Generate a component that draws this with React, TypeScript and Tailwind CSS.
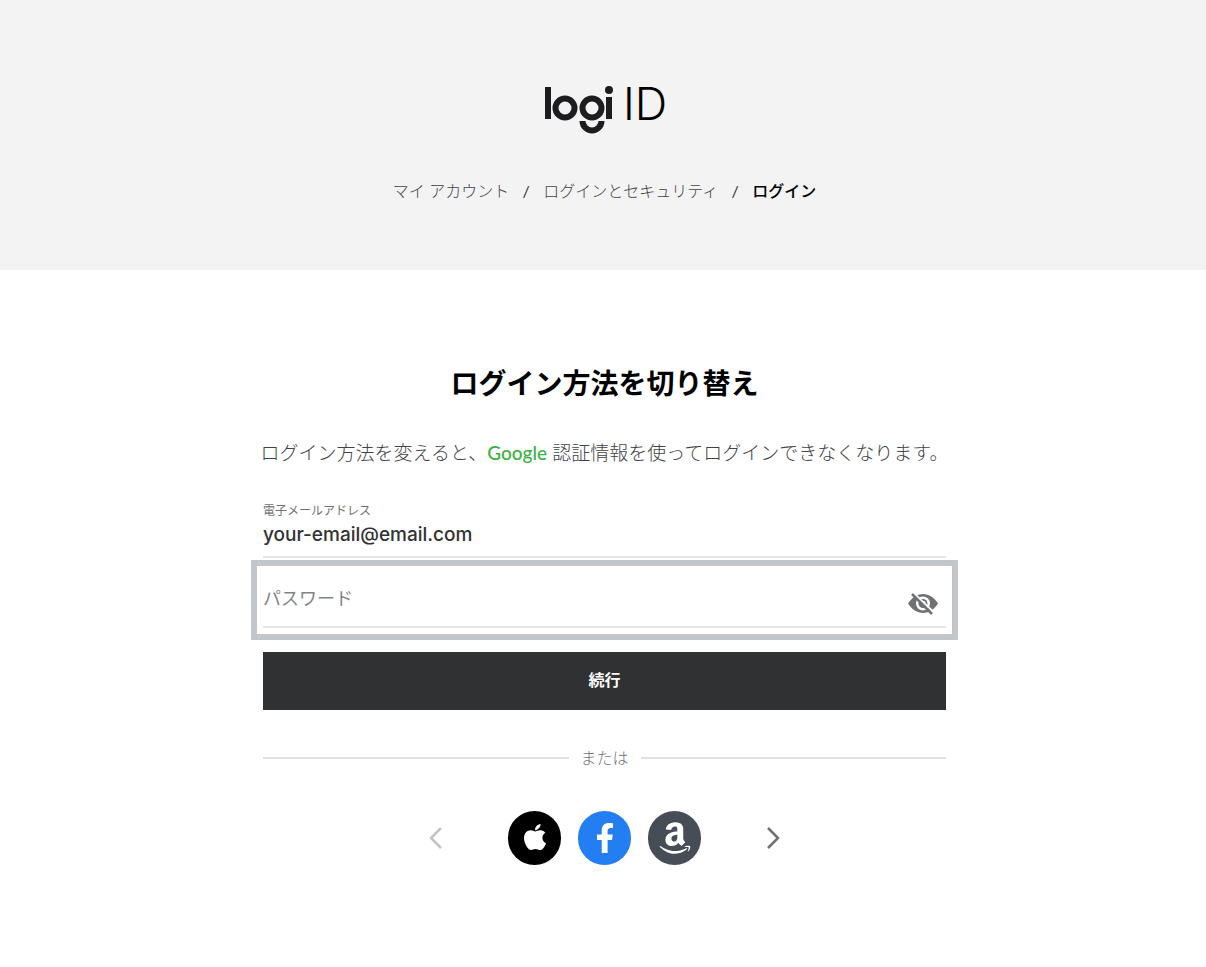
import { useState } from "react";
import { FaAmazon, FaApple, FaFacebookF } from "react-icons/fa";

const breadcrumbs = [
  { label: "マイ アカウント", href: "#account" },
  { label: "ログインとセキュリティ", href: "#security" },
];

const providers = [
  {
    name: "Apple",
    className: "bg-black",
    icon: <FaApple className="size-8 pb-0.5" />,
  },
  {
    name: "Facebook",
    className: "bg-[#237ef2]",
    icon: <FaFacebookF className="size-[30px]" />,
  },
  {
    name: "Amazon",
    className: "bg-[#474d57]",
    icon: <FaAmazon className="size-9" />,
  },
];

function Logo() {
  return (
    <svg
      viewBox="0 0 120 48"
      className="w-[120px] h-12 overflow-visible"
      role="img"
      aria-label="logi ID"
    >
      <g fill="#1d1d1f">
        <rect x="0" y="1" width="6" height="32" />
        <rect x="61" y="11" width="6" height="22" />
        <circle cx="64" cy="4" r="4" />
      </g>
      <g fill="none" stroke="#1d1d1f" strokeWidth="6">
        <circle cx="20" cy="22" r="9.500" />
        <circle cx="47" cy="22" r="9.500" />
        <path d="M37.500 35a9.500 9.500 0 0 0 19 0" />
      </g>
      <text
        x="78"
        y="34"
        fontSize="45"
        fontWeight="300"
        fontFamily="Inter, sans-serif"
        fill="#000"
      >
        ID
      </text>
    </svg>
  );
}

function EyeOff() {
  return (
    <svg viewBox="0 0 30 22" className="w-[30px] h-[22px]" aria-hidden="true">
      <path
        d="M0 10.500C4 4.500 9 1 15 1s11 3.500 15 9.500C26 16.500 21 20 15 20S4 16.500 0 10.500z"
        fill="#707173"
      />
      <circle cx="15" cy="10.500" r="7" fill="#fff" />
      <circle cx="15" cy="10.500" r="4.500" fill="#707173" />
      <circle cx="16" cy="9.500" r="1.500" fill="#fff" />
      <path d="M5.500 0L26 19.500" stroke="#fff" strokeWidth="2" />
      <path d="M4 1l20 20" stroke="#707173" strokeWidth="2.500" />
    </svg>
  );
}

export default function App() {
  const [showPassword, setShowPassword] = useState<boolean>(false);

  return (
    <div className="bg-white font-['Lato','Noto_Sans_CJK_JP',sans-serif] text-[#303133]">
      <header className="bg-[#f3f3f3] pl-[3px] pt-[86px] pb-[67px] flex flex-col items-center">
        <Logo />
        <nav
          aria-label="breadcrumb"
          className="mt-[45px] flex items-center text-base leading-6"
        >
          {breadcrumbs.map((item) => (
            <span key={item.label} className="flex">
              <a href={item.href} className="font-light text-[#3f4346]">
                {item.label}
              </a>
              <span className="w-[34px] text-center">/</span>
            </span>
          ))}
          <a href="#login" aria-current="page" className="font-medium text-black">
            ログイン
          </a>
        </nav>
      </header>

      <main className="pl-[3px] pt-[92px] pb-[102px] flex flex-col items-center">
        <h1 className="text-[28px] leading-[42px] font-bold text-black">
          ログイン方法を切り替え
        </h1>
        <p className="mt-[35px] text-[19px] leading-7 font-light text-[#3f4346]">
          ログイン方法を変えると、
          <span className="font-medium text-[#3bb143]">Google</span>{" "}
          認証情報を使ってログインできなくなります。
        </p>

        <form
          className="mt-9 w-full max-w-[683px]"
          onSubmit={(e) => e.preventDefault()}
        >
          <div className="border-b-2 border-[#e3e5e6]">
            <label
              htmlFor="email"
              className="block text-xs leading-4 text-[#707173]"
            >
              電子メールアドレス
            </label>
            <input
              id="email"
              type="email"
              defaultValue="your-email@email.com"
              className="block w-full h-[37px] pb-1.5 font-['Inter',sans-serif] text-[19px] font-medium outline-none"
            />
          </div>

          <div className="-mx-3 mt-0.5 border-[6px] border-[#c1c6ca] px-1.5 pb-1.5">
            <div className="flex items-center border-b-2 border-[#e3e5e6] h-[62px]">
              <input
                id="password"
                type={showPassword ? "text" : "password"}
                aria-label="パスワード"
                placeholder="パスワード"
                className="flex-1 h-full pt-1 text-lg placeholder:text-[#808487] outline-none"
              />
              <button
                type="button"
                aria-label="パスワードを表示"
                onClick={() => setShowPassword(!showPassword)}
                className="mr-2 pt-4"
              >
                <EyeOff />
              </button>
            </div>
          </div>

          <button
            type="submit"
            className="mt-3 w-full h-[58px] bg-[#303133] pb-0.5 text-base font-bold text-white"
          >
            続行
          </button>
        </form>

        <div className="mt-9 w-full max-w-[683px] flex items-center gap-3">
          <div className="flex-1 h-0.5 bg-[#e1e1e1]" />
          <span className="text-base leading-6 font-light text-[#707173]">
            または
          </span>
          <div className="flex-1 h-0.5 bg-[#e1e1e1]" />
        </div>

        <div className="mt-[41px] flex items-center">
          <button type="button" aria-label="前へ" className="text-[#c1c3c5]">
            <svg viewBox="0 0 14 24" className="w-3.5 h-6" fill="none">
              <path d="M12 2L2 12l10 10" stroke="currentColor" strokeWidth="2.500" />
            </svg>
          </button>
          <div className="mx-[65px] flex gap-[17px]">
            {providers.map((provider) => (
              <button
                key={provider.name}
                type="button"
                aria-label={provider.name}
                className={`${provider.className} w-[53px] h-[54px] rounded-full flex items-center justify-center text-white`}
              >
                {provider.icon}
              </button>
            ))}
          </div>
          <button type="button" aria-label="次へ" className="text-[#707173]">
            <svg viewBox="0 0 14 24" className="w-3.5 h-6" fill="none">
              <path d="M2 2l10 10L2 22" stroke="currentColor" strokeWidth="2.500" />
            </svg>
          </button>
        </div>
      </main>
    </div>
  );
}
